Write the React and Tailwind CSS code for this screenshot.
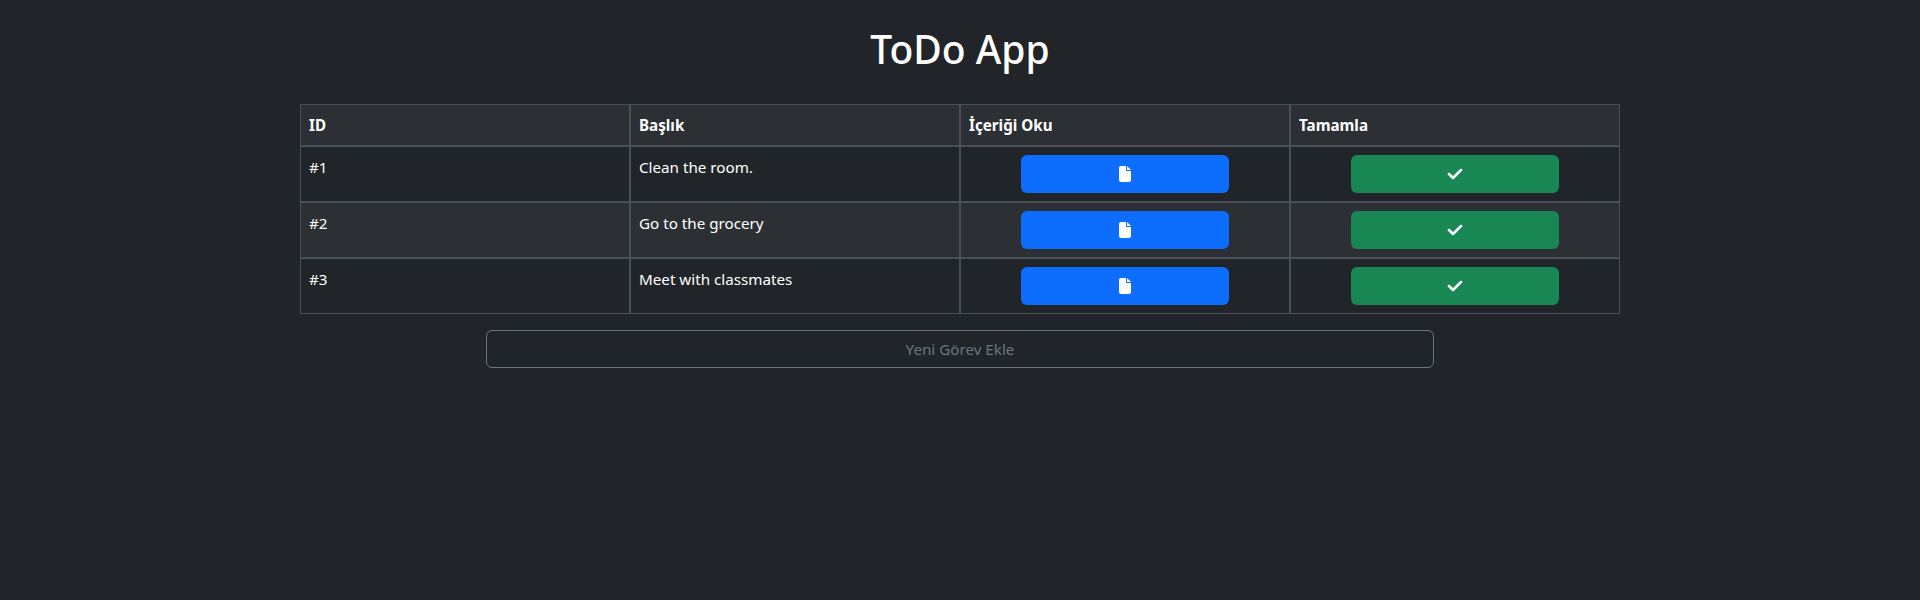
import React from 'react';
import { FaFile, FaCheck } from 'react-icons/fa6';

const todos = [{
  id: 1,
  title: 'Clean the room.'
}, {
  id: 2,
  title: 'Go to the grocery'
}, {
  id: 3,
  title: 'Meet with classmates'
}];

export default function App() {
  return <div className="min-h-[600px] bg-[#212529] text-white font-['Noto_Sans','Open_Sans',sans-serif] text-[15.2px] leading-6">
      <div className="w-[1320px] mx-auto">
        <h1 className="pt-[25px] pb-[31px] text-center text-[39px] leading-[48px] font-[550]">ToDo App</h1>

        <table className="w-full table-fixed border-separate border-spacing-0">
          <thead>
            <tr className="bg-[#2c3034]">
              <th className="border border-[#495057] p-2 text-left font-bold">ID</th>
              <th className="border border-[#495057] p-2 text-left font-bold">Başlık</th>
              <th className="border border-[#495057] p-2 text-left font-bold">İçeriği Oku</th>
              <th className="border border-[#495057] p-2 text-left font-bold">Tamamla</th>
            </tr>
          </thead>
          <tbody>
            {todos.map((todo, i) => <tr key={todo.id} className={i % 2 === 1 ? 'bg-[#2c3034]' : ''}>
                <td className="border border-[#495057] p-2 align-top">#{todo.id}</td>
                <td className="border border-[#495057] p-2 align-top">{todo.title}</td>
                <td className="border border-[#495057] p-2">
                  <button className="flex items-center justify-center w-[208px] h-[38px] mx-auto rounded-md bg-[#0d6efd] text-white">
                    <FaFile className="w-4 h-4" />
                  </button>
                </td>
                <td className="border border-[#495057] p-2">
                  <button className="flex items-center justify-center w-[208px] h-[38px] mx-auto rounded-md bg-[#198754] text-white">
                    <FaCheck className="w-4 h-4 stroke-[28px]" />
                  </button>
                </td>
              </tr>)}
          </tbody>
        </table>

        <div className="flex justify-center mt-4">
          <input type="text" placeholder="Yeni Görev Ekle" className="w-[948px] h-[38px] px-3 rounded-md border border-[#6c757d] bg-[#212529] text-center placeholder:text-[#6c757d] outline-none" />
        </div>
      </div>
    </div>;
}
